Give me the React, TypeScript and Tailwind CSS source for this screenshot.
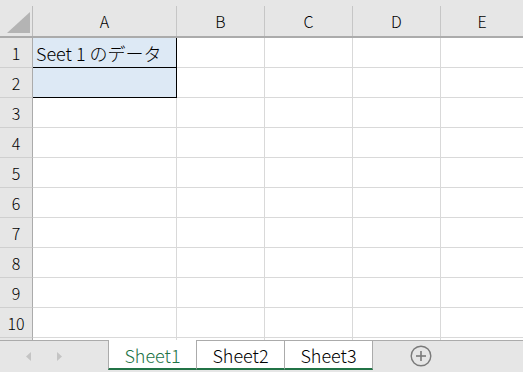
import React from "react";

const FONT = "font-['Noto_Sans_CJK_JP','Noto_Sans',sans-serif] font-light";
const cols = ["A", "B", "C", "D", "E"];
const colW = ["w-[144px]", "w-[88px]", "w-[88px]", "w-[88px]", "flex-1"];

function Corner() {
  return (
    <div className="w-[33px] h-full shrink-0 flex flex-col justify-end">
      <div className="h-[30px] border-r border-[#bdbdbd] flex items-end pb-[3px] pl-[7px]">
        <svg width="23" height="21" viewBox="0 0 23 21">
          <polygon points="23,0 23,21 0,21" fill="#b4b4b4" />
        </svg>
      </div>
    </div>
  );
}

function HeaderRow() {
  return (
    <div className="flex h-[38px] shrink-0 bg-[#e6e6e6] border-b-2 border-[#ababab]">
      <Corner />
      {cols.map((c, i) => (
        <div key={c} className={`${colW[i]} shrink-0 h-full flex flex-col justify-end`}>
          <div
            className={`h-[30px] flex items-center justify-center text-[16px] leading-none text-black pb-[1px] ${
              i < 4 ? "border-r border-[#c6c6c6]" : ""
            }`}
          >
            {c}
          </div>
        </div>
      ))}
    </div>
  );
}

function Row({ n }: { n: number }) {
  const sel = n === 1 || n === 2;
  return (
    <div className="flex h-[30px] shrink-0">
      <div className="w-[33px] shrink-0 bg-[#e6e6e6] border-r border-[#ababab] border-b border-b-[#cfcfcf] flex items-center justify-center text-[16px] leading-none text-black">
        {n}
      </div>
      {cols.map((c, i) => {
        const isA = i === 0;
        if (isA && sel) {
          return (
            <div
              key={c}
              className="w-[144px] shrink-0 bg-[#dde9f5] border-r border-b border-black flex items-center pl-[3px] text-[18px] leading-none text-black whitespace-nowrap"
            >
              {n === 1 ? "Seet 1 のデータ" : ""}
            </div>
          );
        }
        return (
          <div
            key={c}
            className={`${colW[i]} shrink-0 border-b border-[#d9d9d9] ${i < 4 ? "border-r" : ""}`}
          />
        );
      })}
    </div>
  );
}

function Tab({ label, active, last }: { label: string; active?: boolean; last?: boolean }) {
  return (
    <div
      className={`h-[30px] flex items-center justify-center bg-white border-b-2 border-b-[#217346] text-[18px] leading-none ${
        active
          ? "w-[89px] border-l border-r border-l-[#ababab] border-r-[#ababab] text-[#217346]"
          : `w-[88px] border-t border-t-[#ababab] text-black ${last ? "w-[87px] border-r border-r-[#ababab]" : "border-r border-r-[#ababab]"}`
      }`}
    >
      <span className="pt-[1px]">{label}</span>
    </div>
  );
}

export default function App() {
  return (
    <div className={`w-[523px] h-[372px] overflow-hidden bg-white flex flex-col ${FONT}`}>
      <div className="h-[340px] shrink-0 flex flex-col overflow-hidden">
        <HeaderRow />
        {Array.from({ length: 10 }, (_, i) => (
          <Row key={i} n={i + 1} />
        ))}
        <div className="flex flex-1">
          <div className="w-[33px] shrink-0 bg-[#e6e6e6] border-r border-[#ababab]" />
          <div className="w-[144px] shrink-0 border-r border-[#d9d9d9]" />
          <div className="w-[88px] shrink-0 border-r border-[#d9d9d9]" />
          <div className="w-[88px] shrink-0 border-r border-[#d9d9d9]" />
          <div className="w-[88px] shrink-0 border-r border-[#d9d9d9]" />
        </div>
      </div>
      <div className="h-[32px] shrink-0 flex bg-[#e6e6e6] items-start">
        <div className="w-[108px] h-full border-t border-[#ababab] flex items-center pb-[1px]">
          <svg width="6" height="9" viewBox="0 0 6 9" className="ml-[26px]">
            <polygon points="5,0 5,9 0,4.5" fill="#c4c4c4" />
          </svg>
          <svg width="6" height="9" viewBox="0 0 6 9" className="ml-[25px]">
            <polygon points="0,0 0,9 5,4.5" fill="#c4c4c4" />
          </svg>
        </div>
        <Tab label="Sheet1" active />
        <Tab label="Sheet2" />
        <Tab label="Sheet3" last />
        <div className="flex-1 h-full border-t border-[#ababab] flex items-center pb-[1px]">
          <svg width="22" height="22" viewBox="0 0 22 22" className="ml-[37px]">
            <circle cx="11" cy="11" r="9.8" fill="none" stroke="#7a7a7a" strokeWidth="1.4" />
            <line x1="6" y1="11" x2="16" y2="11" stroke="#7a7a7a" strokeWidth="1.6" />
            <line x1="11" y1="6" x2="11" y2="16" stroke="#7a7a7a" strokeWidth="1.6" />
          </svg>
        </div>
      </div>
    </div>
  );
}
